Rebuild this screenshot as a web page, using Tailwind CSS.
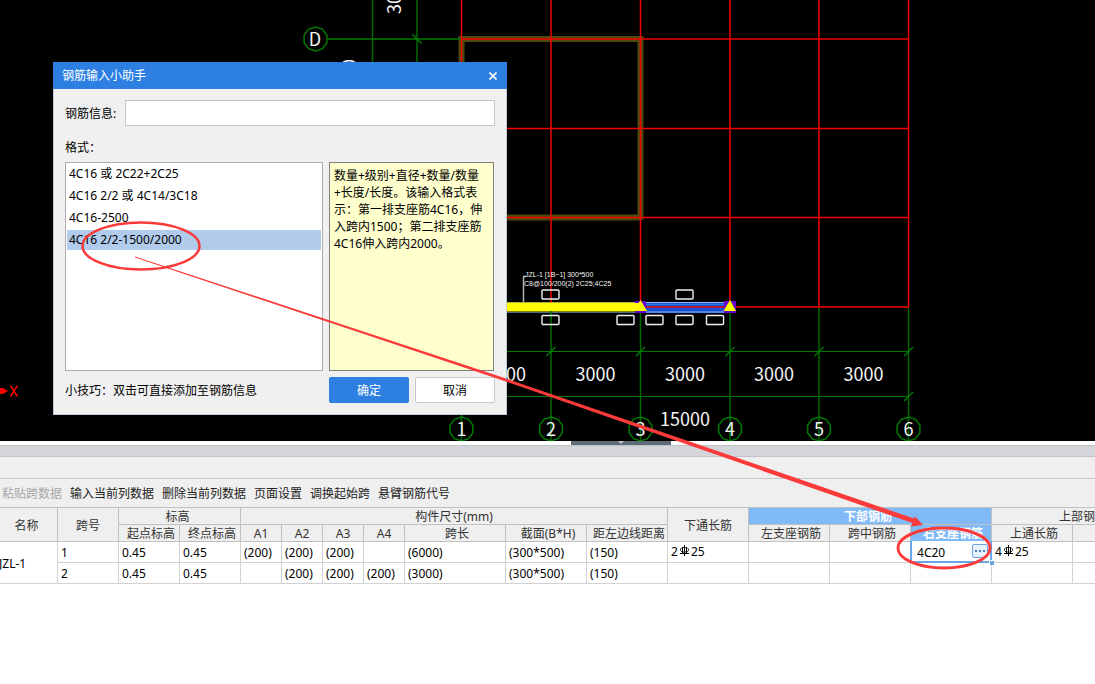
<!DOCTYPE html>
<html lang="zh-CN">
<head>
<meta charset="utf-8">
<title>钢筋输入小助手</title>
<script src="https://cdn.jsdelivr.net/npm/@tailwindcss/browser@4"></script>
</head>
<body class="relative min-h-screen overflow-hidden bg-white font-['Noto_Sans','Noto_Sans_CJK_SC',sans-serif] text-xs text-black">

<!-- Drawing area -->
<main class="relative h-[441px] overflow-hidden bg-black">
  <svg class="absolute inset-0 h-full w-full" fill="none" font-family="'Noto Sans CJK SC',sans-serif" font-size="18" aria-label="轴网">
    <defs>
      <polygon id="bubble" points="0,-12 7,-9.7 11.4,-3.7 11.4,3.7 7,9.7 0,12 -7,9.7 -11.4,3.7 -11.4,-3.7 -7,-9.7"/>
      <path id="tick" d="M-4.500 4.500 4.500 -4.500"/>
      <rect id="tag" width="17" height="9" rx="1"/>
    </defs>
    <!-- walls -->
    <path d="M459 39H641M640.500 36V220M459 217.500H641M461.500 36V220" stroke="#4d4a10" stroke-width="6"/>
    <!-- dimension lines -->
    <g stroke="#007a00" stroke-width="1.500">
      <path d="M372.500 0V100M417 0V100" stroke="#006800"/>
      <path d="M328 39H461M412.500 34.500 421.500 43.500"/>
      <path d="M461 351.500H908.500M461 396.500H908.500" stroke-width="1.200"/>
      <path d="M461.500 307V441M551 307V441M640.500 307V441M730 307V441M819 307V441M908.500 307V441" stroke="#006800"/>
      <use href="#tick" x="551" y="351.500"/><use href="#tick" x="640.500" y="351.500"/><use href="#tick" x="730" y="351.500"/>
      <use href="#tick" x="819" y="351.500"/><use href="#tick" x="908.500" y="351.500"/><use href="#tick" x="908.500" y="396.500"/>
      <use href="#bubble" x="315.500" y="39"/>
      <use href="#bubble" x="461.500" y="429"/><use href="#bubble" x="551" y="429"/><use href="#bubble" x="640.500" y="429"/>
      <use href="#bubble" x="730" y="429"/><use href="#bubble" x="819" y="429"/><use href="#bubble" x="908.500" y="429"/>
    </g>
    <!-- beams -->
    <path d="M461 302.500H640M461 312.500H640" stroke="#4d6a8a"/>
    <rect x="641" y="302" width="89" height="11" fill="#1552d8"/>
    <path d="M641 302.500H730M641 312H730" stroke="#8fb9f0"/>
    <path d="M641 304.500H730" stroke="#2f78e6"/>
    <!-- axes -->
    <path d="M461.500 0V307M551 0V307M640.500 0V307M730 0V307M819 0V307M908.500 0V307M461 39H909M461 128.500H909M461 217.500H909M641 307H909" stroke="#f40000" stroke-width="1.500"/>
    <path d="M507 307H640" stroke="#ffff00" stroke-width="9"/>
    <path d="M551 311V320" stroke="#006800" stroke-width="1.500"/>
    <rect x="635" y="301" width="11" height="12" fill="#6a00d0"/><rect x="724" y="301" width="12" height="12" fill="#6a00d0"/>
    <path d="M634 303H640V311H634Z" fill="#ffff00"/>
    <path d="M640.500 300 647 311H634ZM730 300 736 311H723.500Z" fill="#ffff00"/>
    <g stroke="#f0f0f0" stroke-width="1.400">
      <use href="#tag" x="542" y="290"/><use href="#tag" x="676" y="290"/>
      <use href="#tag" x="542" y="315.500"/><use href="#tag" x="617" y="315.500"/><use href="#tag" x="646" y="315.500"/>
      <use href="#tag" x="676" y="315.500"/><use href="#tag" x="706.500" y="315.500"/>
    </g>
    <path d="M523.500 302V276.500H526" stroke="#b0b0b0" stroke-width="1.500"/>
    <g fill="#f4f4f4" font-size="7" font-family="'Liberation Sans',sans-serif">
      <text x="525" y="277">JZL-1 [1B~1] 300*500</text>
      <text x="524" y="286">C8@100/200(2) 2C25;4C25</text>
    </g>
    <g fill="#f5f5f5" text-anchor="middle">
      <text x="506" y="381">3000</text><text x="595.500" y="381">3000</text><text x="685" y="381">3000</text>
      <text x="774" y="381">3000</text><text x="863.500" y="381">3000</text><text x="685" y="426">15000</text>
      <text x="315" y="46">D</text>
      <text x="461.500" y="436">1</text><text x="551" y="436">2</text><text x="640.500" y="436">3</text>
      <text x="730" y="436">4</text><text x="819" y="436">5</text><text x="908.500" y="436">6</text>
      <text transform="translate(401 -6) rotate(-90)">3000</text>
      <text transform="translate(356 84) rotate(-90)">15000</text>
    </g>
    <path d="M0 388H3L8 391 3 394H0Z" fill="#f00"/>
    <path d="M10.500 385.500 17.500 396.500M17.500 385.500 10.500 396.500" stroke="#f00" stroke-width="1.400"/>
  </svg>
</main>

<!-- Splitter -->
<div class="flex h-1 justify-center pr-1 pl-[151px]">
  <div class="flex h-1 w-[100px] justify-center bg-[#5f6c78]">
    <svg class="h-1 w-2" viewBox="0 0 8 4"><path d="M1 0H7L4 3Z" fill="#c4c8cc"/></svg>
  </div>
</div>
<div class="h-3 border-y border-[#c2c3c8] bg-[#d4d5da]"></div>
<div class="h-[22px] border-b border-[#c4c6ca] bg-[#efefef]"></div>

<nav class="flex h-7 items-center gap-2 bg-[#efefef] pt-0.5 pl-0.5 whitespace-nowrap text-[#222]" aria-label="表格工具栏">
  <button class="text-[#a8a8a8]" disabled>粘贴跨数据</button>
  <button>输入当前列数据</button>
  <button>删除当前列数据</button>
  <button>页面设置</button>
  <button>调换起始跨</button>
  <button>悬臂钢筋代号</button>
</nav>

<div class="overflow-hidden">
  <table class="w-[1175px] table-fixed border-separate border-spacing-0 border-t border-[#c0c0c0] leading-4 whitespace-nowrap [&_td]:border-r [&_td]:border-b [&_td]:border-[#d2d2d2] [&_td]:p-0 [&_td]:pt-0.5 [&_td]:pl-[3px] [&_th]:border-r [&_th]:border-b [&_th]:border-[#c0c0c0] [&_th]:p-0 [&_th]:pt-0.5 [&_th]:leading-[14px] [&_th]:font-normal">
    <colgroup>
      <col class="w-[58px]"><col class="w-[61px]"><col class="w-[61px]"><col class="w-[61px]">
      <col class="w-[41px]"><col class="w-[41px]"><col class="w-[41px]"><col class="w-[41px]">
      <col class="w-[101px]"><col class="w-[81px]"><col class="w-[81px]"><col class="w-[81px]">
      <col class="w-[81px]"><col class="w-[81px]"><col class="w-[81px]"><col class="w-[81px]"><col class="w-[102px]">
    </colgroup>
    <thead class="bg-[#efefef] text-[#333]">
      <tr class="h-[17px]">
        <th rowspan="2"><span class="-ml-1">名称</span></th><th rowspan="2">跨号</th><th colspan="2"><span class="-ml-1">标高</span></th><th colspan="7">构件尺寸(mm)</th>
        <th rowspan="2">下通长筋</th>
        <th colspan="3" class="bg-[#80baf9]"><span class="-ml-1 font-bold text-white">下部钢筋</span></th>
        <th colspan="2">上部钢筋</th>
      </tr>
      <tr class="h-[17px]">
        <th class="px-1"><span class="ml-1">起点标高</span></th><th><span class="ml-1">终点标高</span></th><th>A1</th><th>A2</th><th>A3</th><th>A4</th><th><span class="ml-1">跨长</span></th><th><span class="ml-1">截面(B*H)</span></th><th><span class="ml-1">距左边线距离</span></th>
        <th><span class="ml-1">左支座钢筋</span></th><th><span class="ml-1">跨中钢筋</span></th><th class="bg-[#80baf9]"><span class="ml-1 font-bold text-white">右支座钢筋</span></th><th><span class="ml-1">上通长筋</span></th><th></th>
      </tr>
    </thead>
    <tbody>
      <tr class="h-[21px]">
        <td rowspan="2"><span class="-ml-1">JZL-1</span></td><td>1</td><td>0.45</td><td>0.45</td><td>(200)</td><td>(200)</td><td>(200)</td><td></td><td>(6000)</td><td>(300*500)</td><td>(150)</td>
        <td><span class="-mt-0.5 flex items-center">2<svg class="mx-0.5 mb-1 h-[11px] w-[9px]" viewBox="0 0 9 11" fill="none" stroke="#000" stroke-width="1"><path d="M4.500 0V11M2.500 2.500V8M6.500 2.500V8M0 8.500H9"/><path d="M2 2.500H7L8.500 4V5.500L7 7H2L.5 5.500V4Z" stroke-width=".8"/></svg>25</span></td>
        <td></td><td></td>
        <td class="relative">
          <div class="absolute -top-px -right-px -bottom-px -left-px flex items-center border-2 border-t-0 border-[#6aa5e6] bg-white pr-0.5 pl-[5px]">
            <input class="w-full min-w-0 pt-1 outline-none" value="4C20" aria-label="右支座钢筋">
            <button class="flex h-3.5 w-4 shrink-0 items-center justify-center gap-0.5 rounded-xs border border-[#6aa5e6] bg-[#e8f2fc]" aria-label="更多">
              <i class="size-0.5 bg-[#4a80c0]"></i><i class="size-0.5 bg-[#4a80c0]"></i><i class="size-0.5 bg-[#4a80c0]"></i>
            </button>
            <span class="absolute -right-1 -bottom-1 size-[5px] border-t border-l border-white bg-[#6aa5e6]"></span>
          </div>
        </td>
        <td><span class="-mt-0.5 flex items-center">4<svg class="mx-0.5 mb-1 h-[11px] w-[9px]" viewBox="0 0 9 11" fill="none" stroke="#000" stroke-width="1"><path d="M4.500 0V11M2.500 2.500V8M6.500 2.500V8M0 8.500H9"/><path d="M2 2.500H7L8.500 4V5.500L7 7H2L.5 5.500V4Z" stroke-width=".8"/></svg>25</span></td>
        <td></td>
      </tr>
      <tr class="h-[21px]">
        <td>2</td><td>0.45</td><td>0.45</td><td></td><td>(200)</td><td>(200)</td><td>(200)</td><td>(3000)</td><td>(300*500)</td><td>(150)</td>
        <td></td><td></td><td></td><td></td><td></td><td></td>
      </tr>
    </tbody>
  </table>
</div>

<!-- Helper dialog floating over the drawing -->
<section role="dialog" aria-labelledby="dlg-title" class="absolute top-[62px] left-[53px] flex w-[454px] flex-col bg-[#f0f0f0]">
  <header class="flex h-[27px] items-center justify-between bg-[#2d7fe2] pr-2 pl-[9px] text-white">
    <h1 id="dlg-title">钢筋输入小助手</h1>
    <button class="p-0.5" aria-label="关闭"><svg class="size-2" viewBox="0 0 8 8" stroke="#fff" stroke-width="1.600"><path d="M.5.5 7.500 7.500M7.500.5.5 7.500"/></svg></button>
  </header>
  <div class="flex flex-col border border-t-0 border-[#c3cbdb] px-[11px] pt-[11px] pb-[11px]">
    <div class="flex items-center gap-2">
      <label for="info" class="w-[52px] pt-0.5 whitespace-nowrap">钢筋信息:</label>
      <input id="info" class="h-[26px] flex-1 border border-[#c3c6cc] bg-white px-1 outline-none">
    </div>
    <p id="fmt" class="mt-3.5 mb-1.5 leading-4">格式：</p>
    <div class="flex h-[209px] gap-1.5">
      <ul role="listbox" aria-labelledby="fmt" class="flex w-[258px] flex-col gap-0.5 border border-[#adadad] bg-white px-px pt-px leading-5 [&>li]:px-0.5">
        <li role="option">4C16 或 2C22+2C25</li>
        <li role="option">4C16 2/2 或 4C14/3C18</li>
        <li role="option">4C16-2500</li>
        <li role="option" aria-selected="true" class="bg-[#b1cbed]">4C16 2/2-1500/2000</li>
      </ul>
      <p class="w-[165px] border border-[#808080] bg-[#ffffce] px-1 pt-1 leading-[17px] whitespace-nowrap">数量+级别+直径+数量/数量<br>+长度/长度。该输入格式表<br>示：第一排支座筋4C16，伸<br>入跨内1500；第二排支座筋<br>4C16伸入跨内2000。</p>
    </div>
    <footer class="mt-1.5 flex items-center gap-1.5">
      <p class="flex-1 pt-0.5">小技巧：双击可直接添加至钢筋信息</p>
      <button class="h-[26px] w-20 rounded-xs bg-[#2d7fe2] pt-0.5 text-white">确定</button>
      <button class="h-[26px] w-20 rounded-xs border border-[#c8c8c8] bg-white pt-0.5">取消</button>
    </footer>
  </div>
</section>

<!-- Markup strokes over everything -->
<svg class="pointer-events-none absolute inset-0 h-full w-full" fill="none" stroke="#fb3a3a" aria-hidden="true">
  <ellipse cx="141" cy="246" rx="58.500" ry="23.500" stroke-width="2.500"/>
  <ellipse cx="944" cy="548" rx="46" ry="20" stroke-width="2.800"/>
  <path d="M135 256.500 500 376.500 914 518.500 915 516.500 923 525 911 526.500 912.500 523 500 379.500 135 257.500Z" fill="#fb3a3a" stroke="none"/>
</svg>
</body>
</html>
